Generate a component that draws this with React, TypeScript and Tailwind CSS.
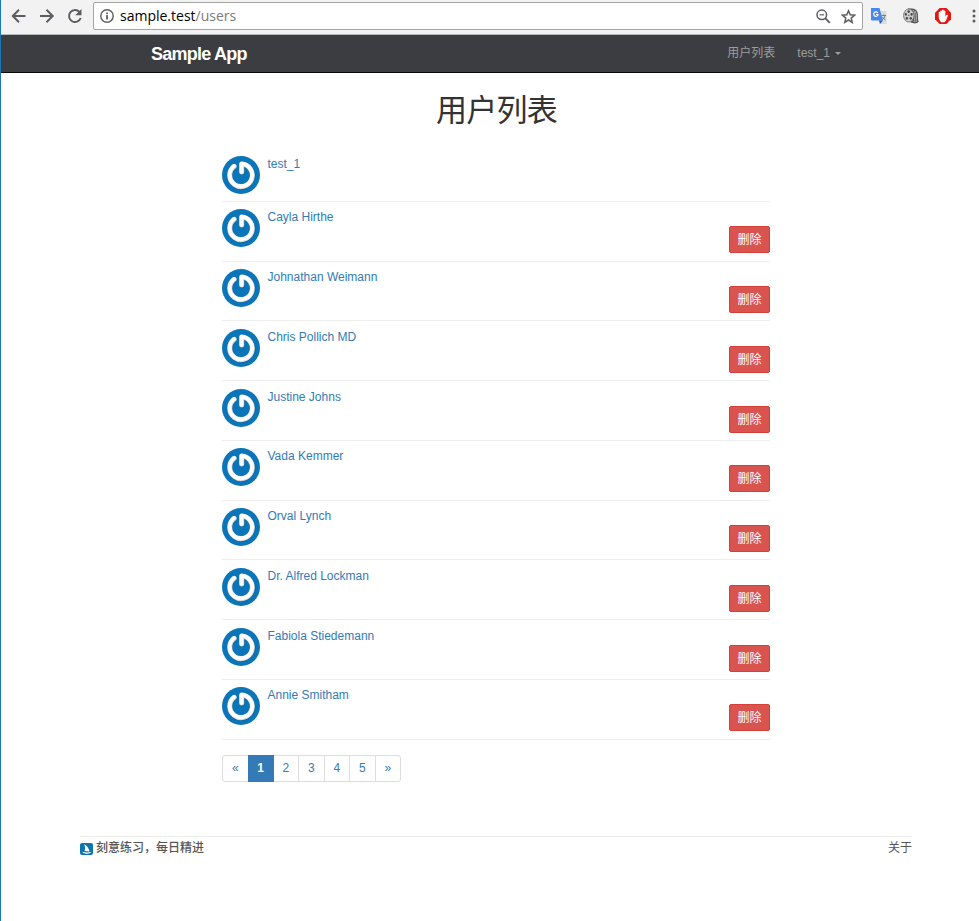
import React from "react";

type Row = { name: string; height: string; pad: string };

const rows: Row[] = [
  { name: "Cayla Hirthe", height: "h-[60px]", pad: "pt-[7px]" },
  { name: "Johnathan Weimann", height: "h-[59px]", pad: "pt-[7px]" },
  { name: "Chris Pollich MD", height: "h-[60px]", pad: "pt-[8px]" },
  { name: "Justine Johns", height: "h-[60px]", pad: "pt-[8px]" },
  { name: "Vada Kemmer", height: "h-[60px]", pad: "pt-[7px]" },
  { name: "Orval Lynch", height: "h-[59px]", pad: "pt-[7px]" },
  { name: "Dr. Alfred Lockman", height: "h-[60px]", pad: "pt-[8px]" },
  { name: "Fabiola Stiedemann", height: "h-[60px]", pad: "pt-[8px]" },
  { name: "Annie Smitham", height: "h-[60px]", pad: "pt-[7px]" },
];

const pages = ["«", "1", "2", "3", "4", "5", "»"];

function Avatar() {
  return (
    <svg className="h-[38px] w-[38px] shrink-0" viewBox="0 0 38 38" fill="none">
      <circle cx="19" cy="19" r="19" fill="#0a75b9" />
      <g strokeLinecap="round" strokeLinejoin="round">
        <path d="M12.200 10.300A11.300 11.300 0 1 0 19.700 8V16" stroke="#08639d" strokeWidth="5.400" transform="translate(.3 .5)" />
        <path d="M12.200 10.300A11.300 11.300 0 1 0 19.700 8V16" stroke="#d4d6d8" strokeWidth="5" />
        <path d="M12.200 10.300A11.300 11.300 0 1 0 19.700 8V16" stroke="#fff" strokeWidth="3.800" transform="translate(-.2 -.3)" />
      </g>
    </svg>
  );
}

function UserLink({ name }: { name: string }) {
  return <a className="ml-[7.5px] h-4 text-[12px] leading-4 text-[#337ab7]">{name}</a>;
}

function BrowserBar() {
  return (
    <div className="flex h-[35px] shrink-0 items-start border-b border-[#b6b9b9] bg-[#f2f2f2] text-[#5a5d61]">
      <svg className="mt-2 ml-[10px] h-4 w-4" viewBox="0 0 16 16" fill="none" stroke="currentColor" strokeWidth="2">
        <path d="M14.5 8H2M8 1.8 1.8 8 8 14.2" />
      </svg>
      <svg className="mt-2 ml-3 h-4 w-4" viewBox="0 0 16 16" fill="none" stroke="currentColor" strokeWidth="2">
        <path d="M1 8h12.5M7.5 1.8 13.7 8l-6.2 6.2" />
      </svg>
      <svg className="mt-2 ml-3 h-4 w-4" viewBox="0 0 16 16" fill="none">
        <path d="M12.6 4.1A6 6 0 1 0 13.700 10" stroke="currentColor" strokeWidth="1.900" />
        <path d="M14.5 1v6.2H8.3z" fill="currentColor" />
      </svg>
      <div className="mt-[2px] ml-[10px] flex h-7 w-[770px] items-center rounded-[2px] border border-[#a5a5a5] bg-white">
        <svg className="ml-[6px] h-[14px] w-[14px]" viewBox="0 0 14 14" fill="none" stroke="currentColor">
          <circle cx="7" cy="7" r="6.2" strokeWidth="1.4" />
          <path d="M7 6v4.4M7 3.4v1.700" strokeWidth="1.800" />
        </svg>
        <span className="ml-[6px] whitespace-nowrap font-['Open_Sans','Noto_Sans',sans-serif] text-[14px] leading-5 text-[#7c7c7c]">
          <span className="text-black">sample.test</span>/users
        </span>
        <div className="flex-1" />
        <svg className="mr-[10px] h-[15px] w-[15px]" viewBox="0 0 15 15" fill="none" stroke="currentColor">
          <circle cx="5.8" cy="5.8" r="4.800" strokeWidth="1.5" />
          <path d="m9.2 9.2 4.6 4.6" strokeWidth="1.9" />
          <path d="M3.6 5.8H8" strokeWidth="1.2" />
        </svg>
        <svg className="mr-[6px] h-[15px] w-[15px]" viewBox="0 0 15 15" fill="none" stroke="currentColor" strokeWidth="1.5">
          <path d="m7.500 1.800 1.700 4 4.300.4-3.300 2.900 1 4.200-3.700-2.300-3.700 2.300 1-4.200L1.500 6.200l4.300-.4z" />
        </svg>
      </div>
      <svg className="mt-2 ml-2 h-4 w-4" viewBox="0 0 16 16">
        <path d="M6 3h9.500v13H9z" fill="#d9dadb" />
        <path d="M0 0h8.500l3.500 12.500H1.200A1.200 1.200 0 0 1 0 11.300z" fill="#4787ee" />
        <path d="m8 12.500h4L9 16z" fill="#2f5bb5" />
        <path d="M6.700 4.800A2.200 2.200 0 1 0 7.100 6.500H5" fill="none" stroke="#fff" strokeWidth="1.200" />
        <path d="M10.800 7.500H15M12.800 6.500v1M14 7.500c-.4 2-1.500 3.500-3 4.500M11.400 9l3 3.200" fill="none" stroke="#68777d" strokeWidth=".9" />
      </svg>
      <svg className="mt-2 ml-4 h-4 w-4" viewBox="0 0 16 16">
        <path d="M5 .6h4c4 0 6 3 6 7.200 0 4 .3 5 .8 6-2 2-5 2-8 .8z" fill="#555" />
        <path d="M10 2c2 2 2.500 8 1 12M12 3c2 3 1.500 8 1 11" stroke="#b8b8b8" fill="none" />
        <ellipse cx="5.800" cy="7.500" rx="5.200" ry="6.600" fill="#cdcdcd" stroke="#666" strokeWidth=".8" />
        <g fill="#444">
          <ellipse cx="5.700" cy="3.600" rx="1.200" ry="1.300" />
          <ellipse cx="2.900" cy="6.300" rx="1" ry="1.400" />
          <ellipse cx="8.600" cy="6.300" rx="1.100" ry="1.400" />
          <ellipse cx="3.900" cy="10.300" rx="1.100" ry="1.400" />
          <ellipse cx="7.700" cy="10.300" rx="1.100" ry="1.400" />
          <circle cx="5.800" cy="7.300" r=".6" />
        </g>
      </svg>
      <svg className="mt-2 ml-4 h-4 w-4" viewBox="0 0 16 16">
        <path d="M4.700 0h6.600L16 4.700v6.600L11.300 16H4.700L0 11.300V4.700z" fill="#e6150f" />
        <path d="M3.700 8V4.600c0-1 1.500-1 1.500 0V3.200c0-1.100 1.700-1.100 1.700 0v-.7c0-1.200 1.800-1.200 1.800 0v.7c0-1.100 1.700-1.100 1.700 0v5.300l1-1.400c.8-.8 1.900-.2 1.500.7L11 12.400 9.400 14.200H6.100L4.500 12c-.6-1-.8-2.500-.8-4z" fill="#fff" />
      </svg>
      <svg className="mt-[9px] ml-[21px] h-[14px] w-[4px] shrink-0" viewBox="0 0 4 14" fill="currentColor">
        <circle cx="2" cy="2" r="1.5" />
        <circle cx="2" cy="7" r="1.5" />
        <circle cx="2" cy="12" r="1.5" />
      </svg>
    </div>
  );
}

export default function App() {
  return (
    <div className="flex h-[921px] w-[979px] flex-col overflow-hidden border-l border-[#1b75bb] bg-white font-['Liberation_Sans','Noto_Sans_CJK_SC',sans-serif] text-[12px] text-[#333]">
      <BrowserBar />
      <nav className="flex h-[38px] shrink-0 items-center border-b border-[#080808] bg-[#3c3d41] pr-[138px] pl-[150px] text-[#9d9d9d]">
        <span className="text-[18px] leading-6 font-bold tracking-[-0.75px] text-white">Sample App</span>
        <span className="-mt-0.5 ml-auto leading-4">用户列表</span>
        <span className="-mt-0.5 ml-[22px] leading-4">test_1</span>
        <span className="ml-[5px] border-x-[3px] border-t-[3px] border-x-transparent border-t-[#9d9d9d]" />
      </nav>
      <main className="ml-[221px] w-[548px]">
        <h1 className="mt-[18px] h-10 pl-px text-center text-[31px] leading-10 font-normal tracking-[-0.8px]">用户列表</h1>
        <ul className="mt-[18px]">
          <li className="flex h-[53px] border-b border-[#eee] pt-[7px]">
            <Avatar />
            <UserLink name="test_1" />
          </li>
          {rows.map((row) => (
            <li key={row.name} className={`flex border-b border-[#eee] ${row.height} ${row.pad}`}>
              <Avatar />
              <UserLink name={row.name} />
              <button className="mt-[17px] ml-auto h-[27px] w-[41px] rounded-[2px] border border-[#d43f3a] bg-[#d9534f] pt-px text-[12px] leading-[24px] text-white">
                删除
              </button>
            </li>
          ))}
        </ul>
        <div className="mt-[15px] flex h-[27px] w-[179px] rounded-[3px] border border-[#ddd]">
          {pages.map((page) => (
            <a
              key={page}
              className={
                page === "1"
                  ? "-my-px -ml-px w-[26px] shrink-0 bg-[#337ab7] pt-px text-center leading-[25px] font-bold text-white"
                  : "flex-1 border-r border-[#ddd] text-center leading-[25px] text-[#337ab7] last:border-r-0"
              }
            >
              {page}
            </a>
          ))}
        </div>
      </main>
      <footer className="mt-[54px] ml-[79px] flex h-6 w-[832px] items-start border-t border-[#eaeaea] text-[#555]">
        <svg className="mt-[6px] h-3 w-[13px]" viewBox="0 0 13 12">
          <rect width="13" height="12" rx="2" fill="#0b76ad" />
          <path d="M4 1.200c3 1.500 5 4 5.500 7.200L4.500 8C5.500 6 5.300 3.500 4 1.200zM2 8.700c3 1 6.500 1 9.300.4-1 1.300-2 1.700-4 1.700S3.300 10.200 2 8.700z" fill="#fff" />
        </svg>
        <span className="ml-[3px] leading-[22px] font-medium">刻意练习，每日精进</span>
        <span className="ml-auto leading-[22px]">关于</span>
      </footer>
    </div>
  );
}
